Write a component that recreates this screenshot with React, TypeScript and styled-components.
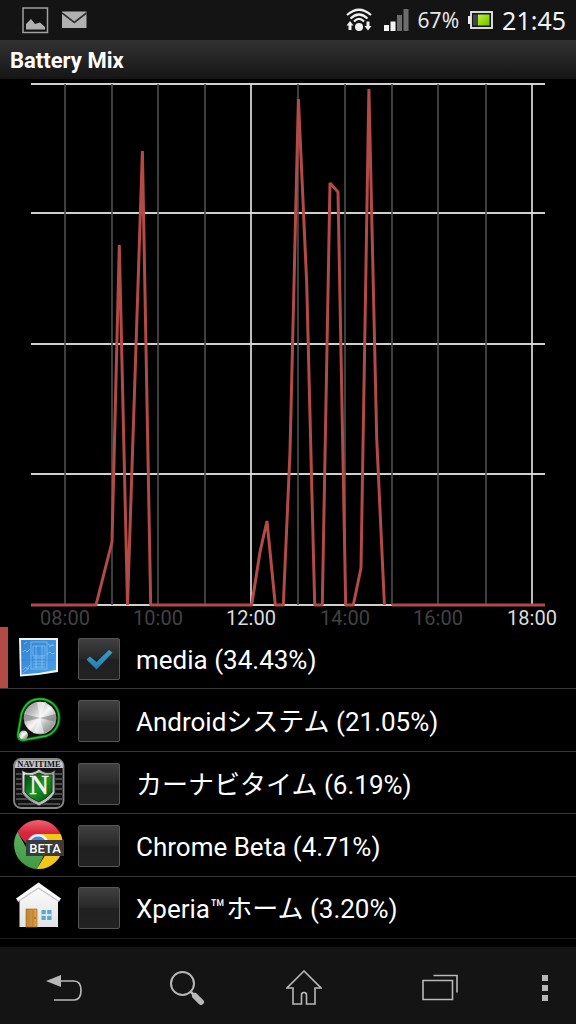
import React, { useState } from "react";
import styled, { createGlobalStyle } from "styled-components";

const GlobalStyle = createGlobalStyle`
  * { box-sizing: border-box; }
  body {
    margin: 0;
    background: #000;
    color: #fff;
    font-family: Roboto, "Noto Sans CJK JP", sans-serif;
  }
`;

const Screen = styled.div`
  display: flex;
  flex-direction: column;
  min-height: 100vh;
  background: #000;
`;

const StatusBar = styled.header`
  display: flex;
  align-items: center;
  justify-content: space-between;
  height: 40px;
  padding: 0 10px 0 22px;
  background: #141414;
  font-family: "Noto Sans", sans-serif;
`;

const StatusGroup = styled.div<{ $gap: number }>`
  display: flex;
  align-items: center;
  gap: ${(p) => p.$gap}px;
  svg { display: block; }
`;

const Percent = styled.span`
  font-size: 21px;
  line-height: 42px;
  color: #e6e6e6;
`;

const Clock = styled.time`
  font-size: 25px;
  line-height: 40px;
  color: #f2f2f2;
`;

const TitleBar = styled.h1`
  height: 39px;
  margin: 0;
  padding: 0 10px;
  background: linear-gradient(#323232, #151515);
  font-size: 22px;
  font-weight: 700;
  line-height: 41px;
`;

const ChartSvg = styled.svg`
  display: block;
  width: 100%;
  height: auto;
  overflow: visible;
`;

const AxisLabel = styled.text<{ $major: boolean }>`
  font-size: 20px;
  text-anchor: middle;
  fill: ${(p) => (p.$major ? "#dcdcdc" : "#424242")};
`;

const AppList = styled.ul`
  display: flex;
  flex: 1;
  flex-direction: column;
  margin: 0;
  padding: 0 0 8px;
  list-style: none;
`;

const AppRow = styled.li`
  display: flex;
  flex: 1;
  min-height: 62px;
  border-bottom: 1px solid #383838;
  &:last-child { border-bottom-color: #1c1c1c; }
`;

const SeriesBar = styled.span<{ $on: boolean }>`
  width: 8px;
  background: ${(p) => (p.$on ? "#b24a46" : "transparent")};
`;

const RowLabel = styled.label`
  display: flex;
  flex: 1;
  align-items: center;
  padding: 2px 0 0 5px;
`;

const AppIcon = styled.svg`
  flex: none;
  display: block;
  width: 52px;
  height: 52px;
`;

const CheckWrap = styled.span`
  position: relative;
  flex: none;
  width: 42px;
  height: 42px;
  margin: 0 16px 0 13px;
`;

const CheckInput = styled.input`
  appearance: none;
  display: block;
  width: 42px;
  height: 42px;
  margin: 0;
  border: 1px solid #565656;
  border-radius: 2px;
  background: linear-gradient(#404040, #282828 48%, #202020 52%, #222);
`;

const CheckMark = styled.svg`
  position: absolute;
  inset: 0;
  pointer-events: none;
`;

const AppName = styled.span`
  padding-top: 2px;
  font-size: 26px;
  line-height: 32px;
  white-space: nowrap;
`;

const NavBar = styled.nav`
  display: grid;
  grid-template-columns: 128fr 118fr 116fr 156fr 58fr;
  height: 77px;
  background: #141414;
`;

const NavButton = styled.button`
  display: flex;
  align-items: center;
  justify-content: center;
  padding: 4px 0 0;
  border: 0;
  background: none;
  color: #b8b8b8;
  &:last-child { padding-right: 4px; }
`;

const gridX = [65, 112, 158, 205, 251, 298, 345, 392, 438, 486, 532];
const gridY = [5, 134, 265, 395, 526];
const majorX = [251, 532];
const hours = ["08:00", "10:00", "12:00", "14:00", "16:00", "18:00"];

const usage =
  "31,526 96,526 112,463 119.3,166 127.5,526 142.4,72 150.7,526 251.7,526 260,473 267,442 275.3,526 283.3,526 290,373 298.4,20 306.7,204 314.7,526 322.3,526 330,104 338,113 345.7,526 353.3,526 361,489 368.9,10 376.7,359 384.4,526";

function UsageChart({ visible }: { visible: boolean }) {
  return (
    <ChartSvg viewBox="0 0 576 548" role="img" aria-label="Battery use by hour">
      {gridY.map((y) => (
        <path key={y} d={`M31 ${y}H545`} stroke="#d0d0cc" strokeWidth="1.8" />
      ))}
      {gridX.map((x) => (
        <path
          key={x}
          d={`M${x} 5V526`}
          stroke={majorX.includes(x) ? "#dedede" : "#4a4a4a"}
          strokeWidth="1.7"
        />
      ))}
      {visible && (
        <g fill="none" stroke="#b24a46" strokeWidth="3" strokeLinejoin="bevel">
          <polyline points={usage} />
          <path d="M392 526H545" />
        </g>
      )}
      {hours.map((h, i) => (
        <AxisLabel key={h} x={gridX[i * 2]} y="546" $major={majorX.includes(gridX[i * 2])}>
          {h}
        </AxisLabel>
      ))}
    </ChartSvg>
  );
}

function MediaIcon() {
  return (
    <AppIcon viewBox="0 0 52 52" aria-hidden="true">
      <defs>
        <linearGradient id="blueprint" x1="0" y1="0" x2="1" y2="1">
          <stop offset="0" stopColor="#3284d4" />
          <stop offset="1" stopColor="#4a9fe8" />
        </linearGradient>
      </defs>
      <path d="M6 5H45V39L25 42L7 43.500Z" fill="#f1f3f4" />
      <path d="M8 7H43V37L26 40L8.500 41.500Z" fill="url(#blueprint)" />
      <g fill="none" stroke="#9ccdf6" strokeWidth=".6">
        <rect x="18" y="9" width="16" height="27" />
        <path d="M20 13H32V23H20ZM20 25H32M20 28H32M20 31H32M20 34H32M23 13V35M29 13V35M10 19l2-2 2 2 3-3M34 21l3-2 2 2 3-1M10 37l3-3 1 2 3-4M10 40l6-5M35 11l3 2 3-1M36 14l4-3M11 11l3-2" />
      </g>
      <path d="M8 27H42" stroke="#2d76bc" strokeWidth=".6" opacity=".5" />
    </AppIcon>
  );
}

function SystemIcon() {
  return (
    <AppIcon viewBox="0 0 52 52" aria-hidden="true">
      <defs>
        <linearGradient id="knob" x1="0" y1="0" x2="1" y2="1">
          <stop offset="0" stopColor="#858585" />
          <stop offset=".3" stopColor="#c2c2c2" />
          <stop offset=".5" stopColor="#f7f7f7" />
          <stop offset=".7" stopColor="#b4b4b4" />
          <stop offset="1" stopColor="#777" />
        </linearGradient>
      </defs>
      <path
        d="M8.500 19C12 8 19 4 27 4C38 4 46 12 46 23C46 32 40 39 33 41L11 45C7 46 4.500 43 5 39Z"
        fill="#10120f"
        stroke="#0c6512"
        strokeWidth="3"
      />
      <path
        d="M8.500 19C12 8 19 4 27 4C38 4 46 12 46 23C46 32 40 39 33 41L11 45C7 46 4.500 43 5 39Z"
        fill="none"
        stroke="#25c633"
        strokeWidth="1.300"
      />
      <circle cx="27" cy="23" r="16" fill="url(#knob)" stroke="#c8c8c8" strokeWidth=".7" />
      <path d="M27 23L11 19V27ZM27 23L43 19V27Z" fill="#777" opacity=".55" />
      <path d="M27 23L20 38H31ZM27 23L24 7H33Z" fill="#fff" opacity=".55" />
      <circle cx="10.500" cy="40" r="4.500" fill="url(#knob)" />
      <circle cx="9.500" cy="38.500" r="1.500" fill="#fff" opacity=".8" />
    </AppIcon>
  );
}

function NavitimeIcon() {
  return (
    <AppIcon viewBox="0 0 52 52" aria-hidden="true">
      <defs>
        <linearGradient id="shield" x1="0" y1="0" x2="1" y2="1">
          <stop offset="0" stopColor="#003d08" />
          <stop offset=".5" stopColor="#169426" />
          <stop offset="1" stopColor="#034b0b" />
        </linearGradient>
        <linearGradient id="chrome" x1="0" y1="0" x2="1" y2="1">
          <stop offset="0" stopColor="#f4f4f4" />
          <stop offset=".5" stopColor="#9a9a9a" />
          <stop offset="1" stopColor="#d8d8d8" />
        </linearGradient>
      </defs>
      <rect x="1" y="1" width="49.500" height="49" rx="7" fill="#111" stroke="#858585" strokeWidth="1.800" />
      <path d="M2 10V8Q2 2 8 2H44Q50 2 50 8V10Z" fill="#c4c4c4" />
      <path d="M3 16H49M3 21H49M3 26H49M3 31H49M3 36H49M3 41H49M5 46H47" stroke="#5c5c5c" strokeWidth="1.300" />
      <path d="M9 12L12 14Q20 16 26 11Q32 16 39 14L42 12V35Q37 43 26 48Q14 43 9 35Z" fill="url(#chrome)" stroke="#292929" />
      <path d="M12 17Q20 19 26 15Q32 19 39 17V34Q35 40 26 44Q16 40 12 34Z" fill="url(#shield)" stroke="#183a1b" />
      <text x="26" y="9" textAnchor="middle" fontFamily="Liberation Serif, serif" fontWeight="700" fontSize="8.500" fill="#141414">
        NAVITIME
      </text>
      <text x="26" y="36" textAnchor="middle" fontFamily="Liberation Serif, serif" fontSize="27" fill="#f0f0f0" stroke="#f0f0f0" strokeWidth=".6">
        N
      </text>
    </AppIcon>
  );
}

function ChromeIcon() {
  return (
    <AppIcon viewBox="0 0 52 52" aria-hidden="true">
      <defs>
        <linearGradient id="red" x1="0" y1="0" x2="0" y2="1">
          <stop offset="0" stopColor="#f0656f" />
          <stop offset=".5" stopColor="#d9273f" />
          <stop offset="1" stopColor="#ce1e38" />
        </linearGradient>
        <linearGradient id="green" x1="0" y1="0" x2="0" y2="1">
          <stop offset="0" stopColor="#5cb35d" />
          <stop offset="1" stopColor="#3f9845" />
        </linearGradient>
        <clipPath id="disc"><circle cx="25.500" cy="24.500" r="24.500" /></clipPath>
      </defs>
      <g clipPath="url(#disc)">
        <path d="M0 0H52V14H26Q16 16 14 25L4 12Z" fill="url(#red)" />
        <path d="M4 11L14 29Q20 38 31 35L23 51H0V10Z" fill="url(#green)" />
        <path d="M26 14H52V52H22L34 32Q38 20 26 14Z" fill="#f5c518" />
        <circle cx="25" cy="25" r="11" fill="#f3f4f4" />
        <circle cx="25" cy="25" r="8.500" fill="#3d8be0" />
      </g>
      <rect x="13" y="20" width="38" height="16" fill="#3b3b3b" />
      <text x="32" y="33" textAnchor="middle" fontSize="13" fontWeight="500" fill="#fff">BETA</text>
    </AppIcon>
  );
}

function XperiaHomeIcon() {
  return (
    <AppIcon viewBox="0 0 52 52" aria-hidden="true">
      <defs>
        <linearGradient id="wall" x1="0" y1="0" x2="0" y2="1">
          <stop offset="0" stopColor="#fdfdfd" />
          <stop offset="1" stopColor="#e1e2e2" />
        </linearGradient>
        <linearGradient id="door" x1="0" y1="0" x2="1" y2="0">
          <stop offset="0" stopColor="#bf812e" />
          <stop offset="1" stopColor="#dda24a" />
        </linearGradient>
      </defs>
      <path d="M6.500 17L25.500 2L45 17V45H6.500Z" fill="url(#wall)" />
      <path d="M25.500 .5L3 16.500L5 19.500L25.500 6L46 19.500L48 16.500Z" fill="#fafafa" />
      <path d="M5 19.500L25.500 6L46 19.500" fill="none" stroke="#c2c4c5" strokeWidth="1.200" />
      <path d="M13 27H24V45H13Z" fill="url(#door)" stroke="#a96f23" strokeWidth=".7" />
      <path d="M20 28V44" stroke="#ad7427" strokeWidth=".8" />
      <circle cx="22" cy="36" r=".8" fill="#755019" />
      <path d="M28.500 28H38.500V38H28.500Z" fill="#58a9cf" />
      <path d="M33.500 28V38M28.500 33H38.500" stroke="#eef5f8" strokeWidth="1.300" />
    </AppIcon>
  );
}

const apps = [
  { id: "media", name: "media (34.43%)", Icon: MediaIcon },
  { id: "system", name: "Androidシステム (21.05%)", Icon: SystemIcon },
  { id: "navitime", name: "カーナビタイム (6.19%)", Icon: NavitimeIcon },
  { id: "chrome-beta", name: "Chrome Beta (4.71%)", Icon: ChromeIcon },
  { id: "home", name: "Xperia™ホーム (3.20%)", Icon: XperiaHomeIcon },
];

export default function App() {
  const [checked, setChecked] = useState<string[]>(["media"]);
  const toggle = (id: string) =>
    setChecked((ids) => (ids.includes(id) ? ids.filter((x) => x !== id) : [...ids, id]));

  return (
    <Screen>
      <GlobalStyle />
      <StatusBar>
        <StatusGroup $gap={13}>
          <svg width="27" height="27" viewBox="0 0 27 27" aria-hidden="true">
            <rect x="1" y="1" width="24.500" height="24.500" fill="none" stroke="#a0a0a0" strokeWidth="1.500" />
            <path d="M4 22.500V17L9 12L13 17L18 15.500L23 20V22.500Z" fill="#b0b0b0" />
          </svg>
          <svg width="25" height="18" viewBox="0 0 25 18" aria-hidden="true">
            <path d="M0 .5H24.500V17H0Z" fill="#b0b0b0" />
            <path d="M0 2L12.300 11.500L24.500 2" fill="none" stroke="#303030" strokeWidth="1.700" />
          </svg>
        </StatusGroup>
        <StatusGroup $gap={9}>
          <StatusGroup $gap={12}>
            <svg width="26" height="24" viewBox="0 0 26 24" aria-hidden="true">
              <g fill="none" stroke="#f0f0f0" strokeWidth="2.200">
                <path d="M1 7Q13-3.500 25 7M4.500 10.500Q13 2.500 21.500 10.500M8 13.500Q13 8.500 18 13.500" />
              </g>
              <circle cx="13" cy="19" r="4" fill="#f0f0f0" />
              <path d="M4 13L7.500 17.500H5.500V22H2.500V17.500H.5ZM22 22.500L18.500 18H20.500V13.500H23.500V18H25.500Z" fill="#f0f0f0" />
            </svg>
            <svg width="25" height="22" viewBox="0 0 25 22" aria-hidden="true">
              <path d="M0 16H5V22H0ZM6.500 12.500H11.500V22H6.500Z" fill="#f4f4f4" />
              <path d="M13 6H18V22H13ZM19.500 0H24.500V22H19.500Z" fill="#6c6c6c" />
            </svg>
          </StatusGroup>
          <Percent>67%</Percent>
          <svg width="25" height="18" viewBox="0 0 25 18" aria-hidden="true">
            <defs>
              <linearGradient id="charge" x1="0" y1="0" x2="1" y2="1">
                <stop offset="0" stopColor="#bcea5c" />
                <stop offset=".5" stopColor="#93dc0c" />
                <stop offset="1" stopColor="#78bd00" />
              </linearGradient>
            </defs>
            <rect x="3" y="1" width="21" height="16" fill="#171717" stroke="#eee" strokeWidth="1.800" />
            <rect x="0" y="5" width="2.500" height="8" fill="#eee" />
            <rect x="5" y="3.500" width="5" height="11" fill="#444" />
            <rect x="10" y="3.500" width="11.500" height="11" fill="url(#charge)" />
          </svg>
          <Clock>21:45</Clock>
        </StatusGroup>
      </StatusBar>
      <TitleBar>Battery Mix</TitleBar>
      <UsageChart visible={checked.includes("media")} />
      <AppList>
        {apps.map(({ id, name, Icon }) => (
          <AppRow key={id}>
            <SeriesBar $on={checked.includes(id)} />
            <RowLabel htmlFor={id}>
              <Icon />
              <CheckWrap>
                <CheckInput
                  type="checkbox"
                  id={id}
                  checked={checked.includes(id)}
                  onChange={() => toggle(id)}
                />
                {checked.includes(id) && (
                  <CheckMark viewBox="0 0 42 42" aria-hidden="true">
                    <defs>
                      <linearGradient id="tick" x1="0" y1="0" x2="0" y2="1">
                        <stop offset="0" stopColor="#3aa0d0" />
                        <stop offset="1" stopColor="#237ba5" />
                      </linearGradient>
                    </defs>
                    <path d="M8.500 21.500L12 18.500L18.500 24L31 12L34.500 14.500L18.500 31.500Z" fill="url(#tick)" />
                  </CheckMark>
                )}
              </CheckWrap>
              <AppName>{name}</AppName>
            </RowLabel>
          </AppRow>
        ))}
      </AppList>
      <NavBar>
        <NavButton type="button" aria-label="Back">
          <svg width="36" height="28" viewBox="0 0 36 28" aria-hidden="true">
            <path d="M0 7L15 1V13Z" fill="currentColor" />
            <path d="M14 7H28Q35 7 35 16.500T28 26H8" fill="none" stroke="currentColor" strokeWidth="1.700" />
          </svg>
        </NavButton>
        <NavButton type="button" aria-label="Search">
          <svg width="36" height="36" viewBox="0 0 36 36" aria-hidden="true">
            <circle cx="13.500" cy="13.500" r="11.500" fill="none" stroke="currentColor" strokeWidth="2" />
            <path d="M21.500 21.500L25 25" stroke="currentColor" strokeWidth="2.500" />
            <path d="M26 26L32 32" stroke="currentColor" strokeWidth="6" strokeLinecap="round" />
          </svg>
        </NavButton>
        <NavButton type="button" aria-label="Home">
          <svg width="36" height="36" viewBox="0 0 36 36" aria-hidden="true">
            <path
              d="M18 1L1 18H7V34H15.500V25Q15.500 22.500 18 22.500T20.500 25V34H29V18H35Z"
              fill="none"
              stroke="currentColor"
              strokeWidth="1.600"
            />
          </svg>
        </NavButton>
        <NavButton type="button" aria-label="Recent apps">
          <svg width="36" height="27" viewBox="0 0 36 27" aria-hidden="true">
            <path d="M1 6.500H30.500V25.500H1ZM11.500 1.500H35V18.500" fill="none" stroke="currentColor" strokeWidth="1.600" />
          </svg>
        </NavButton>
        <NavButton type="button" aria-label="More options">
          <svg width="6" height="26" viewBox="0 0 6 26" aria-hidden="true">
            <path d="M0 0H6V6H0ZM0 10H6V16H0ZM0 20H6V26H0Z" fill="currentColor" />
          </svg>
        </NavButton>
      </NavBar>
    </Screen>
  );
}
